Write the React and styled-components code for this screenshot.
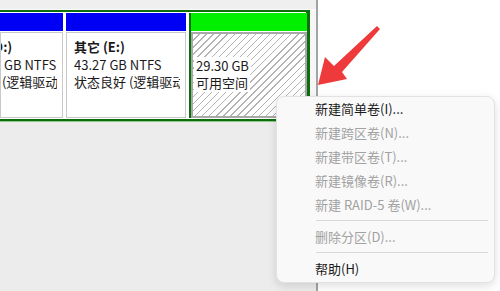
import React from 'react';
import styled, { createGlobalStyle } from 'styled-components';

const GlobalStyle = createGlobalStyle`
  html, body { margin: 0; padding: 0; background: #fff; }
`;

const partitions = [
    { id: 'd', width: 63, color: '#0000f4', indent: -54, lines: ['新加卷 (D:)', '18630.02 GB NTFS', '状态良好 (逻辑驱动器)'] },
    { id: 'e', width: 120, color: '#0000f4', indent: 7, lines: ['其它 (E:)', '43.27 GB NTFS', '状态良好 (逻辑驱动器)'] },
];

const menuItems = [
    { label: '新建简单卷(I)...' },
    { label: '新建跨区卷(N)...', disabled: true },
    { label: '新建带区卷(T)...', disabled: true },
    { label: '新建镜像卷(R)...', disabled: true },
    { label: '新建 RAID-5 卷(W)...', disabled: true },
    { sep: true },
    { label: '删除分区(D)...', disabled: true },
    { sep: true },
    { label: '帮助(H)' },
];

const App = () => {
    return (
        <Screen>
            <GlobalStyle />
            <DiskPane>
                <TopStrip />
                <DiskRow>
                    <ExtendedFrame>
                        {partitions.map((p) => (
                            <Partition key={p.id} $w={p.width}>
                                <PartitionHeader $color={p.color} />
                                <PartitionBody>
                                    <TextClip>
                                        <PartitionText style={{ marginLeft: p.indent }}>
                                            <VolumeName>{p.lines[0]}</VolumeName>
                                            <div>{p.lines[1]}</div>
                                            <div>{p.lines[2]}</div>
                                        </PartitionText>
                                    </TextClip>
                                </PartitionBody>
                            </Partition>
                        ))}
                        <Partition $w={116} $framed>
                            <PartitionHeader $color="#00f000" />
                            <FreeBody>
                                <PartitionText>
                                    <VolumeName>&nbsp;</VolumeName>
                                    <FreeLabel>29.30 GB</FreeLabel>
                                    <FreeLabel>可用空间</FreeLabel>
                                </PartitionText>
                            </FreeBody>
                        </Partition>
                    </ExtendedFrame>
                </DiskRow>
            </DiskPane>
            <RightPane />

            <Arrow width="70" height="66" viewBox="0 0 70 66">
                <polygon points="61,2 64,5 26,48 31,55 2,61 9,33 18,42" fill="#ef3a3b" />
            </Arrow>

            <ContextMenu>
                {menuItems.map((m, i) =>
                    m.sep
                        ? <MenuSeparator key={`sep-${i}`} />
                        : <MenuItem key={m.label} $disabled={m.disabled}>{m.label}</MenuItem>
                )}
            </ContextMenu>
        </Screen>
    );
};

const Screen = styled.div`
    position: relative;
    width: 500px;
    height: 291px;
    overflow: hidden;
    display: flex;
    font-family: "Noto Sans CJK SC", "Noto Sans", sans-serif;
    font-size: 13px;
    color: #1a1a1a;
`;

const DiskPane = styled.div`
    width: 316px;
    flex-shrink: 0;
    display: flex;
    flex-direction: column;
    background: #ececec;
    border-right: 2px solid #a3a3a3;
`;

const TopStrip = styled.div`
    height: 9px;
    background: #efefef;
    border-bottom: 1px solid #fbfbfb;
`;

const DiskRow = styled.div`
    background: #f6f6f6;
    padding-right: 6px;
`;

const ExtendedFrame = styled.div`
    display: flex;
    gap: 3px;
    background: #fff;
    border: 2px solid #0c6f0c;
    border-left: none;
    border-right-width: 4px;
    padding: 1px 1px 1px 0;
    box-shadow: 0 1px 0 #8cc88c;
`;

const Partition = styled.div`
    width: ${p => p.$w}px;
    flex-shrink: 0;
    display: flex;
    flex-direction: column;
    border-left: ${p => p.$framed ? '2px solid #0c6f0c' : 'none'};
`;

const PartitionHeader = styled.div`
    height: 18px;
    background: ${p => p.$color};
    border-bottom: 1px solid #fff;
`;

const PartitionBody = styled.div`
    height: 84px;
    border: 1px solid #c9c9c9;
    background: #fff;
    padding: 0 5px 0 0;
    white-space: nowrap;
`;

const TextClip = styled.div`
    height: 100%;
    overflow: hidden;
`;

const FreeBody = styled.div`
    height: 82px;
    border: 2px solid #a8a8a8;
    padding: 0 0 0 1px;
    overflow: hidden;
    white-space: nowrap;
    background: repeating-linear-gradient(135deg, #ffffff 0 4px, #b3b3b3 4px 5px);
`;

const PartitionText = styled.div`
    padding-top: 5px;
    line-height: 17.5px;
`;

const VolumeName = styled.div`
    font-weight: bold;
`;

const FreeLabel = styled.div`
    display: table;
    background: #fff;
    padding: 0 2px;
`;

const RightPane = styled.div`
    flex: 1;
    background: #fff;
`;

const Arrow = styled.svg`
    position: absolute;
    left: 316px;
    top: 24px;
`;

const ContextMenu = styled.div`
    position: absolute;
    left: 276px;
    top: 96px;
    width: 217px;
    padding-bottom: 1px;
    background: #f9f9f9;
    border: 1px solid #e2e2e2;
    border-radius: 8px;
    box-shadow: 0 3px 10px rgba(0, 0, 0, 0.13);
`;

const MenuItem = styled.div`
    height: 24px;
    line-height: 24px;
    padding-left: 38px;
    white-space: nowrap;
    color: ${p => p.$disabled ? '#a2a2a2' : '#1b1b1b'};
`;

const MenuSeparator = styled.div`
    height: 1px;
    background: #d9d9d9;
    margin: 3px 6px 4px 39px;
`;

export default App;
